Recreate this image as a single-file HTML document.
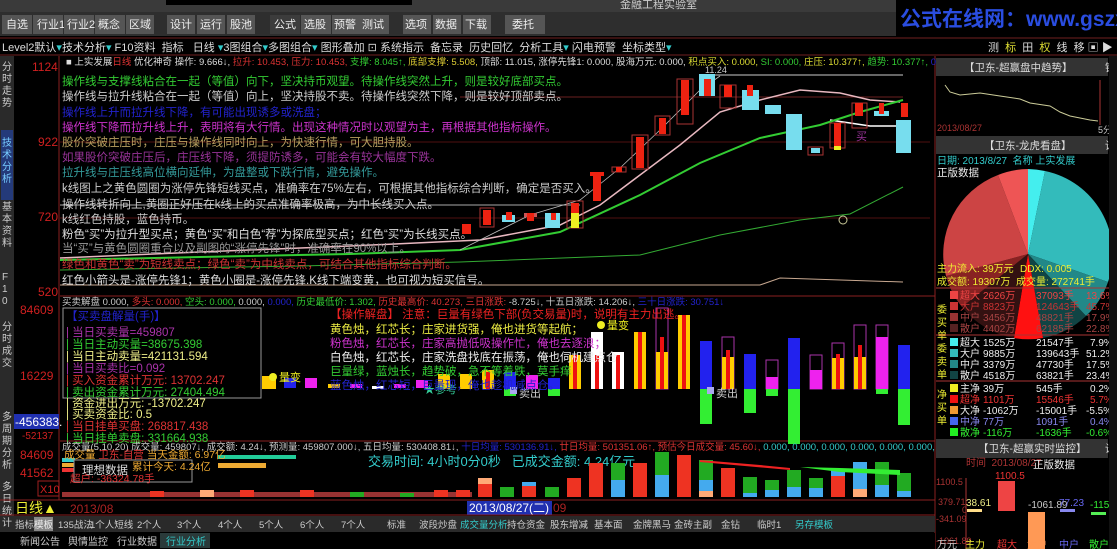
<!DOCTYPE html>
<html><head><meta charset="utf-8"><style>
html,body{margin:0;padding:0;background:#000;overflow:hidden}
svg{display:block}
text{font-family:"Liberation Sans","Noto Sans CJK SC",sans-serif}
.pre{white-space:pre}
</style></head><body>
<svg width="1117" height="549" viewBox="0 0 1117 549" xmlns="http://www.w3.org/2000/svg">
<rect width="1117" height="549" fill="#000"/>
<rect x="0" y="0" width="1117" height="12" fill="#3a3a3a"/>
<rect x="166" y="0" width="246" height="5" fill="#000"/>
<text x="620" y="8" fill="#ccc" font-size="11">金融工程实验室</text>
<rect x="0" y="12" width="1117" height="24" fill="#2e2e2e"/>
<g font-size="11" fill="#eee">
<rect x="2" y="15" width="30" height="19" fill="#555"/><text x="6" y="28">自选</text>
<rect x="33" y="15" width="30" height="19" fill="#555"/><text x="37" y="28">行业1</text>
<rect x="64" y="15" width="30" height="19" fill="#555"/><text x="67" y="28">行业2</text>
<rect x="95" y="15" width="30" height="19" fill="#555"/><text x="98" y="28">概念</text>
<rect x="126" y="15" width="28" height="19" fill="#555"/><text x="129" y="28">区域</text>
<rect x="167" y="15" width="28" height="19" fill="#555"/><text x="170" y="28">设计</text>
<rect x="197" y="15" width="28" height="19" fill="#555"/><text x="200" y="28">运行</text>
<rect x="227" y="15" width="28" height="19" fill="#555"/><text x="230" y="28">股池</text>
<rect x="270" y="15" width="30" height="19" fill="#3c3c3c"/><text x="274" y="28">公式</text>
<rect x="301" y="15" width="30" height="19" fill="#555"/><text x="304" y="28">选股</text>
<rect x="332" y="15" width="30" height="19" fill="#555"/><text x="334" y="28">预警</text>
<rect x="361" y="15" width="28" height="19" fill="#555"/><text x="362" y="28">测试</text>
<rect x="403" y="15" width="28" height="19" fill="#555"/><text x="405" y="28">选项</text>
<rect x="433" y="15" width="28" height="19" fill="#555"/><text x="435" y="28">数据</text>
<rect x="463" y="15" width="28" height="19" fill="#555"/><text x="465" y="28">下载</text>
<rect x="505" y="15" width="40" height="19" fill="#555"/><text x="512" y="28">委托</text>
</g>
<rect x="896" y="0" width="221" height="36" fill="#000"/>
<text x="900" y="26" fill="#2a4de0" font-size="21" font-weight="bold">公式在线网：www.gszx.com.cn</text>
<rect x="0" y="36" width="1117" height="20" fill="#000"/>
<line x1="0" y1="38" x2="1117" y2="38" stroke="#702020"/>
<line x1="0" y1="55" x2="1117" y2="55" stroke="#702020"/>
<g font-size="11" fill="#ddd">
<text x="2" y="51" class="pre">Level2默认<tspan fill="#3cc">▾</tspan>技术分析<tspan fill="#3cc">▾</tspan> F10资料  指标   日线 <tspan fill="#3cc">▾</tspan>3图组合<tspan fill="#3cc">▾</tspan>多图组合<tspan fill="#3cc">▾</tspan> 图形叠加 ⊡ 系统指示  备忘录  历史回忆  分析工具<tspan fill="#3cc">▾</tspan> 闪电预警  坐标类型<tspan fill="#3cc">▾</tspan></text>
<text x="988" y="51" class="pre">测  <tspan fill="#dd3">标</tspan>  田  <tspan fill="#dd3">权</tspan>  线  移 ▣ ▶</text>
</g>
<rect x="0" y="56" width="14" height="476" fill="#2a2a2a"/>
<rect x="1" y="130" width="12" height="70" fill="#243a7a"/>
<g font-size="10" fill="#ccc"><text x="2" y="70">分</text><text x="2" y="82">时</text><text x="2" y="94">走</text><text x="2" y="106">势</text>
<text x="2" y="146" fill="#7cf">技</text><text x="2" y="158" fill="#7cf">术</text><text x="2" y="170" fill="#7cf">分</text><text x="2" y="182" fill="#7cf">析</text>
<text x="2" y="210">基</text><text x="2" y="222">本</text><text x="2" y="234">资</text><text x="2" y="246">料</text>
<text x="2" y="280">F</text><text x="2" y="292">1</text><text x="2" y="304">0</text>
<text x="2" y="330">分</text><text x="2" y="342">时</text><text x="2" y="354">成</text><text x="2" y="366">交</text>
<text x="2" y="420">多</text><text x="2" y="432">周</text><text x="2" y="444">期</text><text x="2" y="456">分</text><text x="2" y="468">析</text>
<text x="2" y="490">多</text><text x="2" y="502">日</text><text x="2" y="514">统</text><text x="2" y="526">计</text></g>
<line x1="59" y1="56" x2="59" y2="500" stroke="#8a2020"/>
<line x1="935" y1="56" x2="935" y2="549" stroke="#8a2020"/>
<g font-size="12" fill="#d02020">
<text x="32" y="71">1124</text><text x="38" y="146">922</text><text x="38" y="221">720</text><text x="38" y="296">520</text>
<text x="20" y="314">84609</text><text x="20" y="380">16229</text>
<text x="20" y="459">84609</text><text x="20" y="477">41562</text></g>
<rect x="14" y="414" width="45" height="15" fill="#2030b0"/><text x="15" y="426" font-size="12" fill="#fff">-456383.</text>
<text x="22" y="439" font-size="10" fill="#d02020">-52137</text>
<rect x="38" y="481" width="21" height="15" fill="none" stroke="#a02020"/><text x="40" y="493" font-size="11" fill="#d02020">X10</text>
<line x1="60" y1="296" x2="935" y2="296" stroke="#8a2020"/>
<line x1="60" y1="441" x2="935" y2="441" stroke="#8a2020"/>
<line x1="0" y1="500" x2="935" y2="500" stroke="#8a2020"/>
<line x1="60" y1="142" x2="930" y2="142" stroke="#501010"/>
<line x1="60" y1="218" x2="930" y2="218" stroke="#501010"/>
<line x1="460" y1="97" x2="903" y2="97" stroke="#6a2020"/>
<line x1="60" y1="205" x2="580" y2="205" stroke="#aaa"/>
<line x1="710" y1="75" x2="903" y2="75" stroke="#ccc"/>
<g font-size="9.5">
<text x="66" y="65" fill="#ddd">■ 上实发展<tspan fill="#d33">日线</tspan> 优化神奇 操作: 9.666↓, <tspan fill="#d33">拉升: 10.453, 压力: 10.453,</tspan> <tspan fill="#3c3">支撑: 8.045↑,</tspan> <tspan fill="#dc3">底部支撑: 5.508,</tspan> 顶部: 11.015, 涨停先锋1: 0.000, 股海万元: 0.000, <tspan fill="#dd3">积点买入: 0.000,</tspan> <tspan fill="#3c3">SI: 0.000,</tspan> <tspan fill="#dd3">庄压: 10.377↑,</tspan> <tspan fill="#3c3">趋势: 10.377↑,</tspan> <tspan fill="#22c">0.000,</tspan> 0.000,</text>
</g>
<polyline points="60,258 200,252 350,246 480,240 560,225 600,205 640,175 680,145 720,112 760,100 800,90 840,93 870,100 900,102" fill="none" stroke="#e8b8c0" stroke-width="1.5"/>
<polyline points="830,120 870,126 903,126" fill="none" stroke="#fff" stroke-width="1.5"/>
<polyline points="60,260 200,257 350,254 460,250 560,232 640,195 700,163 760,138 820,125 860,112 903,100" fill="none" stroke="#3c3" stroke-width="2"/>
<polyline points="60,270 300,266 460,262 640,255 720,235 800,220 850,214 903,187" fill="none" stroke="#3a3" stroke-width="1"/>
<polyline points="60,285 760,285 780,278 903,282" fill="none" stroke="#c8a890" stroke-width="1"/>
<polyline points="460,250 530,215 580,200 620,168 660,130 700,90 720,76" fill="none" stroke="#bbb" stroke-width="0.8"/>
<g>
<rect x="462" y="224" width="9" height="10" fill="#e21"/>
<rect x="480" y="208" width="14" height="19" fill="none" stroke="#a33"/><rect x="483" y="210" width="8" height="15" fill="#e21"/>
<rect x="502" y="215" width="13" height="7" fill="#7de"/><rect x="506" y="212" width="6" height="8" fill="#e21"/>
<rect x="524" y="213" width="13" height="4" fill="#c55"/><rect x="527" y="213" width="7" height="8" fill="#e21"/>
<rect x="545" y="213" width="15" height="15" fill="#7de"/><rect x="551" y="213" width="5" height="7" fill="#e21"/>
<rect x="567" y="201" width="16" height="27" fill="none" stroke="#a33"/><rect x="571" y="203" width="8" height="10" fill="#e21"/><rect x="571" y="213" width="8" height="15" fill="#ee2"/>
<rect x="590" y="172" width="14" height="4" fill="#e21"/><rect x="593" y="173" width="8" height="28" fill="#e21"/>
<rect x="612" y="167" width="14" height="5" fill="none" stroke="#a33"/><rect x="616" y="167" width="6" height="5" fill="#e21"/>
<rect x="632" y="135" width="16" height="34" fill="none" stroke="#a33"/><rect x="636" y="137" width="8" height="31" fill="#e21"/>
<rect x="655" y="116" width="15" height="19" fill="none" stroke="#a33"/><rect x="659" y="118" width="7" height="16" fill="#e21"/>
<rect x="677" y="79" width="16" height="45" fill="none" stroke="#a33"/><rect x="681" y="80" width="8" height="35" fill="#e21"/>
<rect x="699" y="74" width="16" height="22" fill="#7de"/><rect x="704" y="79" width="7" height="17" fill="#e21"/>
<rect x="720" y="85" width="16" height="23" fill="none" stroke="#a33"/><rect x="724" y="85" width="8" height="12" fill="#e21"/>
<rect x="742" y="90" width="17" height="20" fill="#7de"/><rect x="747" y="85" width="6" height="11" fill="#e21"/>
<rect x="765" y="105" width="16" height="9" fill="#7de"/>
<rect x="786" y="114" width="16" height="36" fill="#7de"/>
<rect x="808" y="147" width="15" height="8" fill="none" stroke="#a33"/><rect x="811" y="148" width="9" height="5" fill="#7de"/>
<rect x="830" y="123" width="15" height="25" fill="none" stroke="#a33"/><rect x="834" y="123" width="7" height="23" fill="#e21"/><rect x="834" y="146" width="7" height="4" fill="#ee2"/>
<rect x="852" y="103" width="15" height="25" fill="none" stroke="#a33"/><rect x="855" y="103" width="8" height="13" fill="#e21"/>
<rect x="874" y="111" width="15" height="5" fill="#7de"/><rect x="879" y="103" width="5" height="11" fill="#e21"/>
<rect x="896" y="120" width="15" height="33" fill="#7de"/><rect x="901" y="103" width="7" height="14" fill="#e21"/>
<circle cx="843" cy="220" r="4" fill="none" stroke="#cc9"/>
<text x="856" y="140" fill="#939" font-size="11">买</text>
<text x="705" y="73" font-size="9" fill="#ccc">11.24</text>
</g>
<g font-size="11.5">
<text x="62" y="85" fill="#3c3">操作线与支撑线粘合在一起（等值）向下，坚决持币观望。待操作线突然上升，则是较好底部买点。</text>
<text x="62" y="100" fill="#ccc">操作线与拉升线粘合在一起（等值）向上，坚决持股不卖。待操作线突然下降，则是较好顶部卖点。</text>
<text x="62" y="116" fill="#22c">操作线上升而拉升线下降，有可能出现诱多或洗盘；</text>
<text x="62" y="131" fill="#c3c">操作线下降而拉升线上升，表明将有大行情。出现这种情况时以观望为主，再根据其他指标操作。</text>
<text x="62" y="146" fill="#b9a060">股价突破庄压时，庄压与操作线同时向上，为快速行情，可大胆持股。</text>
<text x="62" y="161" fill="#939">如果股价突破庄压后，庄压线下降，须提防诱多，可能会有较大幅度下跌。</text>
<text x="62" y="176" fill="#399">拉升线与庄压线高位横向延伸，为盘整或下跌行情，避免操作。</text>
<text x="62" y="192" fill="#ccc">k线图上之黄色圆圈为涨停先锋短线买点，准确率在75%左右，可根据其他指标综合判断，确定是否买入。</text>
<text x="62" y="208" fill="#ccc">操作线转折向上,黄圈正好压在k线上的买点准确率极高，为中长线买入点。</text>
<text x="62" y="223" fill="#ccc">k线红色持股，蓝色持币。</text>
<text x="62" y="238" fill="#ddd">粉色“买”为拉升型买点；黄色“买”和白色“荐”为探底型买点；红色“买”为长线买点。</text>
<text x="62" y="252" fill="#999">当“买”与黄色圆圈重合以及副图的“涨停先锋”时，准确率在90%以上。</text>
<text x="62" y="268" fill="#c33">绿色和黄色“卖”为短线卖点；绿色“卖”为中线卖点，可结合其他指标综合判断。</text>
<text x="62" y="284" fill="#ddd">红色小箭头是-涨停先锋1；黄色小圈是-涨停先锋.K线下端变黄，也可视为短买信号。</text>
</g>
<text x="62" y="305" font-size="9.5" fill="#ccc">买卖解盘 0.000, <tspan fill="#d33">多头: 0.000,</tspan> <tspan fill="#3c3">空头: 0.000,</tspan> 0.000, <tspan fill="#22c">0.000,</tspan> <tspan fill="#3c3">历史最低价: 1.302,</tspan> <tspan fill="#d33">历史最高价: 40.273,</tspan> <tspan fill="#d33">三日涨跌:</tspan> -8.725↓, 十五日涨跌: 14.206↓, <tspan fill="#22c">三十日涨跌: 30.751↓</tspan></text>
<g>
<rect x="482" y="370" width="12" height="19" fill="#fc0"/><rect x="486" y="372" width="4" height="17" fill="#e11"/>
<rect x="504" y="372" width="12" height="17" fill="#22e"/><rect x="504" y="389" width="12" height="7" fill="#3e3"/>
<rect x="526" y="375" width="12" height="14" fill="#e2e"/>
<rect x="548" y="378" width="12" height="11" fill="#22e"/><rect x="548" y="389" width="12" height="7" fill="#3e3"/>
<rect x="569" y="355" width="12" height="34" fill="#fc0"/><rect x="573" y="355" width="4" height="34" fill="#e11"/>
<rect x="591" y="332" width="12" height="57" fill="#fff"/><rect x="595" y="355" width="4" height="34" fill="#e11"/>
<rect x="612" y="352" width="12" height="37" fill="#fff"/><rect x="616" y="355" width="4" height="34" fill="#e11"/>
<rect x="634" y="332" width="12" height="57" fill="#fc0"/><rect x="638" y="332" width="4" height="57" fill="#e11"/>
<rect x="656" y="308" width="12" height="81" fill="none" stroke="#a3a"/><rect x="656" y="352" width="12" height="37" fill="#fc0"/><rect x="660" y="337" width="4" height="52" fill="#e11"/>
<rect x="678" y="315" width="12" height="74" fill="#fc0"/><rect x="682" y="315" width="4" height="74" fill="#e11"/>
<rect x="700" y="341" width="12" height="48" fill="#22e"/><rect x="700" y="389" width="12" height="35" fill="#3e3"/>
<rect x="722" y="337" width="12" height="52" fill="none" stroke="#a3a"/><rect x="722" y="357" width="12" height="32" fill="#fc0"/><rect x="726" y="350" width="4" height="39" fill="#e11"/>
<rect x="744" y="354" width="12" height="35" fill="#22e"/><rect x="744" y="389" width="12" height="24" fill="#3e3"/>
<rect x="766" y="360" width="12" height="29" fill="none" stroke="#a3a"/><rect x="766" y="377" width="12" height="12" fill="#e2e"/><rect x="766" y="389" width="12" height="7" fill="#3e3"/>
<rect x="788" y="338" width="12" height="51" fill="#22e"/><rect x="788" y="389" width="12" height="55" fill="#3e3"/>
<rect x="810" y="355" width="12" height="34" fill="none" stroke="#a3a"/><rect x="810" y="370" width="12" height="19" fill="#e2e"/>
<rect x="832" y="343" width="12" height="46" fill="none" stroke="#a3a"/><rect x="832" y="358" width="12" height="31" fill="#fc0"/><rect x="836" y="354" width="4" height="35" fill="#e11"/>
<rect x="854" y="325" width="12" height="64" fill="none" stroke="#a3a"/><rect x="854" y="357" width="12" height="32" fill="#fc0"/><rect x="858" y="345" width="4" height="44" fill="#e11"/>
<rect x="876" y="325" width="12" height="64" fill="none" stroke="#a3a"/><rect x="876" y="337" width="12" height="52" fill="#e2e"/><rect x="876" y="389" width="12" height="5" fill="#3e3"/>
<rect x="898" y="345" width="12" height="44" fill="#22e"/><rect x="898" y="389" width="12" height="36" fill="#3e3"/>
<rect x="262" y="376" width="14" height="13" fill="#fc0"/><rect x="284" y="378" width="12" height="10" fill="#22e"/>
<rect x="305" y="378" width="12" height="10" fill="#e2e"/><rect x="328" y="384" width="12" height="4" fill="#fc0"/>
<rect x="350" y="384" width="12" height="4" fill="#e2e"/><rect x="372" y="386" width="12" height="3" fill="#fff"/>
<rect x="394" y="384" width="12" height="4" fill="#e2e"/><rect x="416" y="380" width="12" height="8" fill="#e2e"/>
<rect x="438" y="374" width="12" height="15" fill="#fc0"/><rect x="460" y="374" width="12" height="15" fill="#fc0"/>
<circle cx="229" cy="381" r="4" fill="#ee2"/><text x="235" y="385" font-size="11" fill="#ee2">量变</text>
<circle cx="273" cy="377" r="4" fill="#ee2"/><text x="279" y="381" font-size="11" fill="#ee2">量变</text>
<circle cx="601" cy="325" r="4" fill="#ee2"/><text x="607" y="329" font-size="11" fill="#ee2">量变</text>
<rect x="510" y="387" width="7" height="7" fill="#aae"/><text x="519" y="397" font-size="11" fill="#ccc">卖出</text>
<rect x="707" y="387" width="7" height="7" fill="#aae"/><text x="716" y="397" font-size="11" fill="#ccc">卖出</text>
<text x="424" y="393" font-size="11" fill="#3c9">★参考</text>
</g>
<g font-size="11.5">
<text x="330" y="318" fill="#e22">【操作解盘】 注意：巨量有绿色下部(负交易量)时，说明有主力出逃。</text>
<text x="330" y="333" fill="#ee4">黄色烛，红芯长；庄家进货强，俺也进货等起航；</text>
<text x="330" y="347" fill="#c3c">粉色烛，红芯长，庄家高抛低吸操作忙，俺也去逐浪；</text>
<text x="330" y="361" fill="#eee">白色烛，红芯长，庄家洗盘找底在振荡，俺也伺机建点仓</text>
<text x="330" y="375" fill="#3c3">巨量绿，蓝烛长，趋势破，急不等着跌，莫手痒</text>
<text x="330" y="389" fill="#22c">蓝色烛，红芯短，巨量现，俺也趁机减点仓。</text>
</g>
<rect x="63" y="308" width="198" height="90" fill="#000" stroke="#999"/>
<g font-size="11.5">
<text x="66" y="320" fill="#22c">【买卖盘解量(手)】</text>
<text x="66" y="336" fill="#a3a">| 当日买卖量=459807</text>
<text x="66" y="348" fill="#3c3">| 当日主动买量=38675.398</text>
<text x="66" y="360" fill="#ee8">| 当日主动卖量=421131.594</text>
<text x="66" y="372" fill="#a3a">| 当日买卖比=0.092</text>
<text x="66" y="384" fill="#d33">| 买入资金累计万元: 13702.247</text>
<text x="66" y="396" fill="#3c3">| 卖出资金累计万元: 27404.494</text>
<text x="66" y="407" fill="#ee8">| 资金进出万元: -13702.247</text>
<text x="66" y="418" fill="#ee8">| 买卖资金比: 0.5</text>
<text x="66" y="430" fill="#d33">| 当日挂单买盘: 268817.438</text>
<text x="66" y="442" fill="#3c3">| 当日挂单卖盘: 331664.938</text>
</g>
<text x="62" y="450" font-size="9.5" fill="#ccc">成交量(5,10,20) 成交量: 459807↓, 成交额: 4.24↓, 预测量: 459807.000↓, 五日均量: 530408.81↓, <tspan fill="#22c">十日均量: 530136.91↓,</tspan> <tspan fill="#d33">廿日均量: 501351.06↑, 预估今日成交量: 45.60↓,</tspan> <tspan fill="#3cc">0.000, 0.000, 0.000, 0.000, 0.000, 0.000, 0.000, 0.000</tspan></text>
<text x="368" y="466" font-size="13" fill="#3cc" class="pre">交易时间: 4小时0分0秒   已成交金额: 4.24亿元</text>
<rect x="218" y="455" width="78" height="4" fill="#2c9"/>
<rect x="218" y="463" width="48" height="5" fill="#ea3"/>
<rect x="62" y="458" width="13" height="4" fill="#3cc"/><rect x="62" y="463" width="13" height="4" fill="#ea3"/><rect x="62" y="468" width="13" height="4" fill="#e33"/>
<rect x="74" y="460" width="118" height="22" fill="#000" stroke="#999"/>
<text x="82" y="474" font-size="11.5" fill="#ddd">理想数据</text>
<text x="64" y="458" font-size="10.5" fill="#ea3">成交量 <tspan fill="#d33">卫东-自营</tspan> 当天金额: 6.97亿</text>
<text x="70" y="482" font-size="10.5" fill="#d33">超户: -36324.78手</text>
<text x="132" y="470" font-size="10.5" fill="#ea3">累计今天: 4.24亿</text>
<g>
<rect x="478" y="478" width="14" height="19" fill="#e32"/><rect x="478" y="478" width="14" height="6" fill="#fa7"/>
<rect x="500" y="487" width="14" height="10" fill="#2a2"/>
<rect x="522" y="482" width="14" height="15" fill="#e32"/><rect x="522" y="482" width="14" height="4" fill="#4ae"/>
<rect x="545" y="487" width="14" height="10" fill="#2a2"/>
<rect x="567" y="478" width="14" height="19" fill="#e32"/>
<rect x="589" y="463" width="14" height="34" fill="#e32"/>
<rect x="611" y="463" width="14" height="34" fill="#2a2"/><rect x="611" y="480" width="14" height="17" fill="#4ae"/>
<rect x="633" y="463" width="14" height="34" fill="#e32"/>
<rect x="655" y="452" width="14" height="45" fill="#2a2"/><rect x="655" y="475" width="14" height="22" fill="#4ae"/>
<rect x="677" y="455" width="14" height="42" fill="#e32"/>
<rect x="699" y="460" width="14" height="37" fill="#2a2"/><rect x="699" y="480" width="14" height="11" fill="#4ae"/><rect x="699" y="491" width="14" height="6" fill="#fa7"/>
<rect x="721" y="468" width="14" height="29" fill="#e32"/>
<rect x="743" y="477" width="14" height="20" fill="#2a2"/><rect x="743" y="493" width="14" height="4" fill="#4ae"/>
<rect x="765" y="480" width="14" height="17" fill="#2a2"/><rect x="765" y="490" width="14" height="7" fill="#4ae"/>
<rect x="787" y="470" width="14" height="27" fill="#2a2"/><rect x="787" y="487" width="14" height="10" fill="#4ae"/>
<rect x="809" y="478" width="14" height="19" fill="#2a2"/><rect x="809" y="488" width="14" height="9" fill="#4ae"/>
<rect x="831" y="470" width="14" height="27" fill="#e32"/><rect x="831" y="470" width="14" height="6" fill="#4ae"/>
<rect x="853" y="462" width="14" height="35" fill="#4ae"/><rect x="853" y="489" width="14" height="8" fill="#fa7"/>
<rect x="875" y="462" width="14" height="35" fill="#2a2"/><rect x="875" y="485" width="14" height="12" fill="#4ae"/>
<rect x="897" y="473" width="14" height="24" fill="#2a2"/><rect x="897" y="491" width="14" height="6" fill="#4ae"/>
<polygon points="700,460 760,465 790,468 790,470 700,462" fill="#e22"/>
<polygon points="800,467 840,468 900,470 900,475 840,472" fill="#3e3"/>
<rect x="62" y="492" width="410" height="5" fill="#933"/>
<rect x="150" y="491" width="14" height="6" fill="#e32"/><rect x="200" y="490" width="14" height="7" fill="#fa7"/><rect x="240" y="490" width="14" height="7" fill="#e32"/><rect x="300" y="490" width="14" height="7" fill="#e32"/><rect x="350" y="492" width="14" height="5" fill="#2a2"/><rect x="400" y="493" width="14" height="4" fill="#2a2"/><rect x="434" y="490" width="14" height="7" fill="#e32"/><rect x="456" y="490" width="14" height="7" fill="#e32"/>
</g>
<text x="15" y="513" font-size="14" fill="#ee3">日线▲</text>
<text x="70" y="513" font-size="12" fill="#a22">2013/08</text>
<rect x="467" y="501" width="85" height="14" fill="#2030b0"/><text x="469" y="512" font-size="12" fill="#fff">2013/08/27(二)</text>
<text x="553" y="512" font-size="12" fill="#a22">09</text>
<line x1="0" y1="515" x2="935" y2="515" stroke="#8a2020"/>
<rect x="14" y="516" width="921" height="16" fill="#2a2a2a"/>
<g font-size="9.5" fill="#ccc">
<text x="15" y="528">指标</text><rect x="34" y="517" width="19" height="14" fill="#888"/><text x="34" y="528" fill="#eee">模板</text>
<text x="58" y="528">135战法</text><text x="90" y="528">1个人短线</text><text x="137" y="528">2个人</text><text x="177" y="528">3个人</text><text x="218" y="528">4个人</text><text x="259" y="528">5个人</text><text x="300" y="528">6个人</text><text x="341" y="528">7个人</text><text x="387" y="528">标准</text><text x="419" y="528">波段炒盘</text>
<text x="460" y="528" fill="#3cc">成交量分析</text><text x="507" y="528">持仓资金</text><text x="550" y="528">股东增减</text><text x="594" y="528">基本面</text><text x="633" y="528">金牌黑马</text><text x="674" y="528">金砖主副</text><text x="721" y="528">金钻</text><text x="757" y="528">临时1</text><text x="795" y="528" fill="#3cc">另存模板</text>
</g>
<g font-size="10" fill="#ccc">
<rect x="14" y="533" width="921" height="16" fill="#000"/>
<text x="20" y="545">新闻公告</text><text x="68" y="545">舆情监控</text><text x="117" y="545">行业数据</text>
<rect x="160" y="533" width="50" height="15" fill="#2a3a3a"/><text x="166" y="545" fill="#3cc">行业分析</text>
</g>
<rect x="936" y="56" width="181" height="493" fill="#000"/>
<rect x="936" y="58" width="172" height="18" fill="#333"/>
<text x="964" y="71" font-size="10.5" fill="#ddd">【卫东-超赢盘中趋势】</text>
<text x="1105" y="71" font-size="10.5" fill="#ddd">锁</text>
<polyline points="945,85 950,92 960,95 980,93 1000,96 1020,99 1030,103 1050,106 1060,112 1070,116 1080,118 1090,120 1098,121" fill="none" stroke="#cc9" stroke-width="1"/>
<line x1="1100" y1="80" x2="1100" y2="125" stroke="#a33"/>
<text x="937" y="131" font-size="9" fill="#a33">2013/08/27</text><text x="1098" y="133" font-size="9" fill="#ccc">5分钟</text>
<rect x="936" y="136" width="172" height="18" fill="#333"/>
<text x="984" y="149" font-size="10.5" fill="#ddd">【卫东-龙虎看盘】</text><text x="1105" y="149" font-size="10.5" fill="#ddd">设</text>
<text x="937" y="164" font-size="10" fill="#3cc" class="pre">日期: 2013/8/27  名称 上实发展</text>
<text x="937" y="176" font-size="10.5" fill="#eee">正版数据</text>
<g transform="translate(1028,254)">
<path d="M0,0 L0,-85 A85,85 0 0,1 17,-83 Z" fill="#4ee"/>
<path d="M0,0 L17,-83 A85,85 0 0,1 80,28 Z" fill="#3bb"/>
<path d="M0,0 L80,28 A85,85 0 0,1 58,62 Z" fill="#288"/>
<path d="M0,0 L58,62 A85,85 0 0,1 15,84 Z" fill="#144"/>
<path d="M0,0 L15,84 A85,85 0 0,1 -14,84 Z" fill="#f11"/>
<path d="M0,0 L-14,84 A85,85 0 0,1 -66,53 Z" fill="#311"/>
<path d="M0,0 L-66,53 A85,85 0 0,1 -82,22 Z" fill="#822"/>
<path d="M0,0 L-82,22 A85,85 0 0,1 -30,-79 Z" fill="#c44"/>
<path d="M0,0 L-30,-79 A85,85 0 0,1 0,-85 Z" fill="#e55"/>
</g>
<g font-size="10">
<text x="937" y="272" fill="#ee3">主力流入: 39万元</text><text x="1020" y="272" fill="#ee3">DDX: 0.005</text>
<text x="937" y="285" fill="#ee3">成交额: 19307万</text><text x="1016" y="285" fill="#ee3">成交量: 272741手</text>
<line x1="936" y1="288" x2="1117" y2="288" stroke="#a33"/>
<text x="937" y="313" fill="#ee3">委</text><text x="937" y="326" fill="#ee3">买</text><text x="937" y="339" fill="#ee3">单</text>
<text x="937" y="352" fill="#ee3">委</text><text x="937" y="365" fill="#ee3">卖</text><text x="937" y="378" fill="#ee3">单</text>
<text x="937" y="398" fill="#ee3">净</text><text x="937" y="411" fill="#ee3">买</text><text x="937" y="424" fill="#ee3">单</text>
</g>
<g font-size="10">
<rect x="950" y="291" width="8" height="8" fill="#e44"/><text y="299" fill="#e44"><tspan x="960">超大</tspan><tspan x="983">2626万</tspan><tspan x="1036">37093手</tspan><tspan x="1086">13.6%</tspan></text>
<rect x="950" y="302" width="8" height="8" fill="#c33"/><text y="310" fill="#c33"><tspan x="960">大户</tspan><tspan x="983">8823万</tspan><tspan x="1036">124643手</tspan><tspan x="1086">45.7%</tspan></text>
<rect x="950" y="313" width="8" height="8" fill="#933"/><text y="321" fill="#a44"><tspan x="960">中户</tspan><tspan x="983">3456万</tspan><tspan x="1036">48821手</tspan><tspan x="1086">17.9%</tspan></text>
<rect x="950" y="324" width="8" height="8" fill="#522"/><text y="332" fill="#a44"><tspan x="960">散户</tspan><tspan x="983">4402万</tspan><tspan x="1036">62185手</tspan><tspan x="1086">22.8%</tspan></text>
<line x1="936" y1="335" x2="1117" y2="335" stroke="#a33"/>
<rect x="950" y="338" width="8" height="8" fill="#4ee"/><text y="346" fill="#eee"><tspan x="960">超大</tspan><tspan x="983">1525万</tspan><tspan x="1036">21547手</tspan><tspan x="1090">7.9%</tspan></text>
<rect x="950" y="349" width="8" height="8" fill="#3bb"/><text y="357" fill="#eee"><tspan x="960">大户</tspan><tspan x="983">9885万</tspan><tspan x="1036">139643手</tspan><tspan x="1086">51.2%</tspan></text>
<rect x="950" y="360" width="8" height="8" fill="#288"/><text y="368" fill="#eee"><tspan x="960">中户</tspan><tspan x="983">3379万</tspan><tspan x="1036">47730手</tspan><tspan x="1086">17.5%</tspan></text>
<rect x="950" y="371" width="8" height="8" fill="#144"/><text y="379" fill="#eee"><tspan x="960">散户</tspan><tspan x="983">4518万</tspan><tspan x="1036">63821手</tspan><tspan x="1086">23.4%</tspan></text>
<line x1="936" y1="381" x2="1117" y2="381" stroke="#a33"/>
<rect x="950" y="384" width="8" height="8" fill="#ee2"/><text y="392" fill="#eee"><tspan x="960">主净</tspan><tspan x="983">39万</tspan><tspan x="1036">545手</tspan><tspan x="1090">0.2%</tspan></text>
<rect x="950" y="395" width="8" height="8" fill="#e11"/><text y="403" fill="#e33"><tspan x="960">超净</tspan><tspan x="983">1101万</tspan><tspan x="1036">15546手</tspan><tspan x="1090">5.7%</tspan></text>
<rect x="950" y="406" width="8" height="8" fill="#e93"/><text y="414" fill="#eee"><tspan x="960">大净</tspan><tspan x="983">-1062万</tspan><tspan x="1036">-15001手</tspan><tspan x="1086">-5.5%</tspan></text>
<rect x="950" y="417" width="8" height="8" fill="#46e"/><text y="425" fill="#88e"><tspan x="960">中净</tspan><tspan x="983">77万</tspan><tspan x="1036">1091手</tspan><tspan x="1090">0.4%</tspan></text>
<rect x="950" y="428" width="8" height="8" fill="#2e2"/><text y="436" fill="#3e3"><tspan x="960">散净</tspan><tspan x="983">-116万</tspan><tspan x="1036">-1636手</tspan><tspan x="1086">-0.6%</tspan></text>
</g>
<rect x="936" y="439" width="172" height="19" fill="#333"/>
<text x="978" y="452" font-size="10.5" fill="#ddd">【卫东-超赢实时监控】</text><text x="1105" y="452" font-size="10.5" fill="#ddd">设</text>
<text x="966" y="466" font-size="10" fill="#a33" class="pre">时间  2013/08/27</text><text x="1033" y="468" font-size="10.5" fill="#eee">正版数据</text>
<g font-size="9" fill="#a33">
<text x="936" y="485">1100.5</text><text x="938" y="505">379.71</text><text x="962" y="513">0</text><text x="936" y="522">-341.09</text><text x="936" y="544">-1061.89</text>
</g>
<line x1="966" y1="478" x2="966" y2="549" stroke="#a33"/>
<rect x="998" y="481" width="17" height="30" fill="#e44"/><text x="995" y="479" font-size="10" fill="#e33">1100.5</text>
<rect x="967" y="509" width="15" height="3" fill="#fd8"/><text x="966" y="506" font-size="10" fill="#ee8">38.61</text>
<rect x="1028" y="512" width="17" height="37" fill="#f95"/><text x="1028" y="508" font-size="10" fill="#ccc">-1061.89</text>
<rect x="1060" y="509" width="15" height="3" fill="#88e"/><text x="1059" y="506" font-size="10" fill="#66e">77.23</text>
<rect x="1091" y="512" width="15" height="3" fill="#5e5"/><text x="1090" y="508" font-size="10" fill="#3e3">-115.8</text>
<g font-size="10"><text x="937" y="548" fill="#ccc">万元</text><text x="965" y="548" fill="#ee3">主力</text><text x="997" y="548" fill="#e33">超大</text><text x="1027" y="548" fill="#f95">大户</text><text x="1059" y="548" fill="#66e">中户</text><text x="1089" y="548" fill="#3e3">散户</text></g>
<rect x="1109" y="56" width="8" height="493" fill="#111"/>
</svg>
</body></html>
